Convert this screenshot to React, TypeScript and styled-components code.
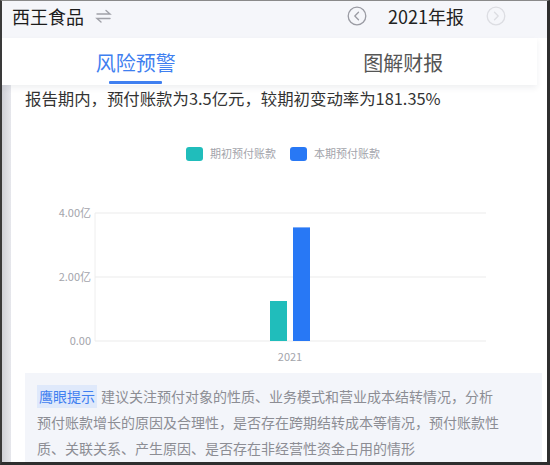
import styled, { createGlobalStyle } from 'styled-components';

const GlobalStyle = createGlobalStyle`
    html, body {
        margin: 0;
        padding: 0;
        background: #ffffff;
    }
    body {
        font-family: "Noto Sans CJK SC", "Noto Sans", sans-serif;
    }
`;

const Frame = styled.div`
    box-sizing: border-box;
    width: 550px;
    height: 465px;
    border-top: 1px solid #8a8a8a;
    border-left: 2px solid #3a3a3a;
    border-right: 3px solid #2e2e2e;
    border-bottom: 3px solid #2e2e2e;
    display: flex;
    flex-direction: column;
    overflow: hidden;
    background: #ffffff;
`;

const Header = styled.div`
    box-sizing: border-box;
    height: 37px;
    flex-shrink: 0;
    display: flex;
    align-items: center;
    padding: 0 41px 8px 10px;
    background: #f5f6fa;
`;

const Company = styled.span`
    font-size: 18px;
    color: #1c1c1c;
    line-height: 1;
`;

const SwapIcon = styled.svg`
    margin-left: 11px;
    width: 17px;
    height: 14px;
`;

const Spacer = styled.div`
    flex: 1;
`;

const ArrowCircle = styled.svg<{ $disabled?: boolean }>`
    width: 20px;
    height: 20px;
    color: ${({ $disabled }) => ($disabled ? '#dcdde2' : '#9a9ba3')};
`;

const Year = styled.span`
    margin: 0 22px 0 21px;
    font-size: 18px;
    color: #222;
    line-height: 1;
`;

const TabBar = styled.div`
    height: 47px;
    flex-shrink: 0;
    margin-right: 10px;
    display: grid;
    grid-template-columns: 1fr 1fr;
    background: #ffffff;
    box-shadow: 0 3px 6px rgba(30, 40, 70, 0.07);
    position: relative;
    z-index: 1;
`;

const Tab = styled.div<{ $active?: boolean }>`
    display: flex;
    flex-direction: column;
    align-items: center;
    justify-content: flex-end;
    font-size: 20px;
    line-height: 26px;
    color: ${({ $active }) => ($active ? '#3f7ff0' : '#555')};
    &::after {
        content: '';
        display: block;
        width: 53px;
        height: 3px;
        margin-top: 5px;
        margin-bottom: 1px;
        border-radius: 1px;
        background: ${({ $active }) => ($active ? '#3f7ff0' : 'transparent')};
    }
`;

const Body = styled.div`
    flex: 1;
    display: flex;
    min-height: 0;
`;

const SideStrip = styled.div`
    width: 9px;
    flex-shrink: 0;
    background: linear-gradient(to right, #cfd0d6, #e6e7ec);
`;

const Main = styled.div`
    flex: 1;
    display: flex;
    flex-direction: column;
    min-width: 0;
    & > * {
        flex-shrink: 0;
    }
`;

const Summary = styled.div`
    padding: 2px 0 0 14px;
    font-size: 16.4px;
    line-height: 22px;
    color: #333;
`;

const Chart = styled.svg`
    display: block;
    width: 534px;
    height: 260px;
    font-family: "Noto Sans CJK SC", "Noto Sans", sans-serif;
`;

const TipBox = styled.div`
    margin: 4px 5px 0 14px;
    padding: 10px 39px 10px 12px;
    background: #f3f5fa;
    font-size: 14px;
    line-height: 26px;
    color: #8c8d94;
`;

const TipTag = styled.span`
    padding: 1px 2px 2px;
    margin-right: 4px;
    background: #dfe9fb;
    color: #3f7ff0;
`;

const bars = [
    { label: '期初预付账款', color: '#20bdbb', value: 1.25 },
    { label: '本期预付账款', color: '#2878f5', value: 3.55 },
];

function ChartView() {
    const base = 232;
    const scale = 128 / 4;
    return (
        <Chart viewBox="0 0 534 260">
            {bars.map((b, i) => (
                <g key={b.label}>
                    <rect x={175 + i * 104} y={38} width={17} height={14} rx={3} fill={b.color} />
                    <text x={199 + i * 104} y={49} fontSize={11} fill="#a3a4ab">
                        {b.label}
                    </text>
                </g>
            ))}
            {[4, 2, 0].map((v) => {
                const y = base - v * scale;
                return (
                    <g key={v}>
                        <line x1={84} x2={475} y1={y} y2={y} stroke="#ebebeb" strokeWidth={1} />
                        <text x={80} y={y + 4} fontSize={11} fill="#a3a4ab" textAnchor="end">
                            {v === 0 ? '0.00' : `${v.toFixed(2)}亿`}
                        </text>
                    </g>
                );
            })}
            <line x1={84} x2={84} y1={104} y2={232} stroke="#eeeeee" strokeWidth={1} />
            {bars.map((b, i) => (
                <rect
                    key={b.label}
                    x={259 + i * 23}
                    y={base - b.value * scale}
                    width={17}
                    height={b.value * scale}
                    fill={b.color}
                />
            ))}
            <text x={279} y={252} fontSize={11} fill="#a3a4ab" textAnchor="middle">
                2021
            </text>
        </Chart>
    );
}

function App() {
    return (
        <>
            <GlobalStyle />
            <Frame>
                <Header>
                    <Company>西王食品</Company>
                    <SwapIcon viewBox="0 0 17 14" fill="none" stroke="#a0a1a8" strokeWidth={1.4} strokeLinecap="round">
                        <path d="M2 5h13l-4-3.5" />
                        <path d="M15 9.5H2l4 3.5" />
                    </SwapIcon>
                    <Spacer />
                    <ArrowCircle viewBox="0 0 20 20" fill="none" stroke="currentColor" strokeWidth={1.3}>
                        <circle cx={10} cy={10} r={8.8} />
                        <path d="M11.5 6.3 7.8 10l3.7 3.7" strokeLinecap="round" strokeLinejoin="round" />
                    </ArrowCircle>
                    <Year>2021年报</Year>
                    <ArrowCircle $disabled viewBox="0 0 20 20" fill="none" stroke="currentColor" strokeWidth={1.3}>
                        <circle cx={10} cy={10} r={8.8} />
                        <path d="M8.5 6.3 12.2 10l-3.7 3.7" strokeLinecap="round" strokeLinejoin="round" />
                    </ArrowCircle>
                </Header>
                <TabBar>
                    <Tab $active>风险预警</Tab>
                    <Tab>图解财报</Tab>
                </TabBar>
                <Body>
                    <SideStrip />
                    <Main>
                        <Summary>报告期内，预付账款为3.5亿元，较期初变动率为181.35%</Summary>
                        <ChartView />
                        <TipBox>
                            <TipTag>鹰眼提示</TipTag>
                            建议关注预付对象的性质、业务模式和营业成本结转情况，分析预付账款增长的原因及合理性，是否存在跨期结转成本等情况，预付账款性质、关联关系、产生原因、是否存在非经营性资金占用的情形
                        </TipBox>
                    </Main>
                </Body>
            </Frame>
        </>
    );
}

export default App;
